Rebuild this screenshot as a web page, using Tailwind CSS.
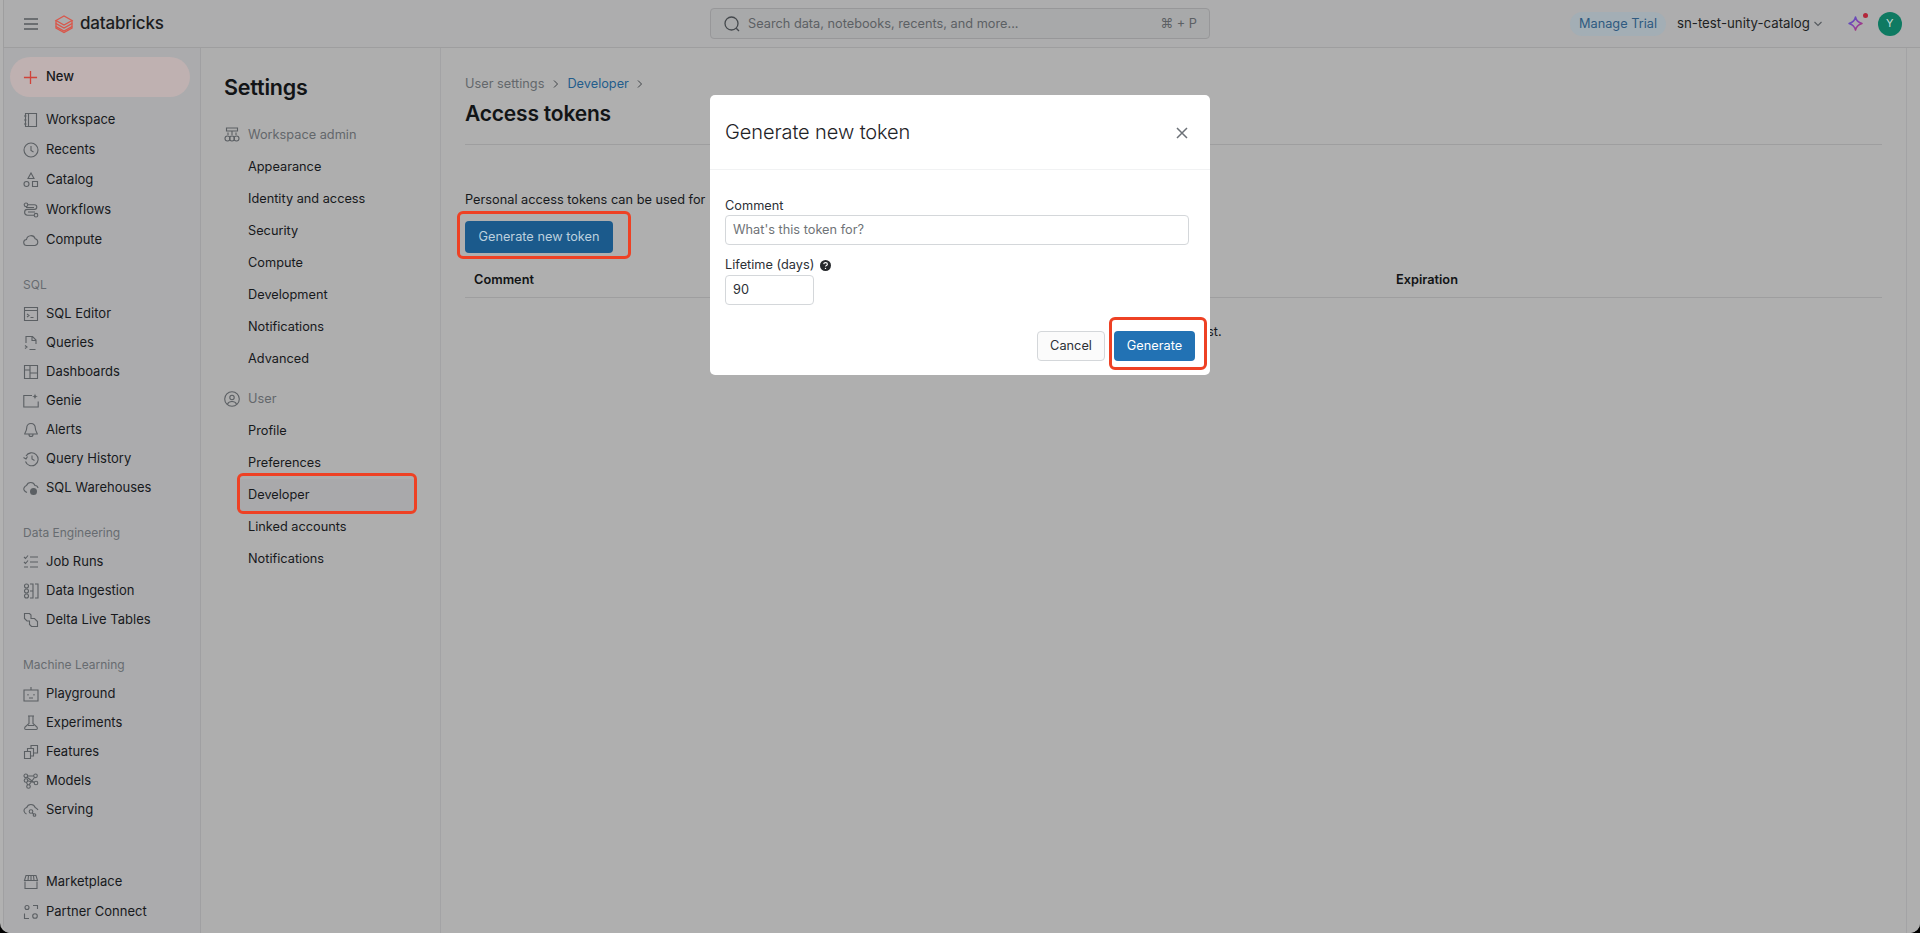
<!DOCTYPE html>
<html lang="en">

<head>
  <meta charset="UTF-8">
  <meta name="viewport" content="width=device-width, initial-scale=1.0">
  <script src="https://cdn.jsdelivr.net/npm/@tailwindcss/browser@4"></script>
  <title>Access tokens - Databricks</title>
</head>

<body class="bg-black font-['Inter','Liberation_Sans',sans-serif] text-[12.75px] text-[#17191c]">
  <div class="relative flex h-[933px] w-[1920px] flex-col overflow-hidden rounded-b-[10px] border-l-[3px] border-[#b1b1b1] bg-[#afafaf]">

    <!-- top bar -->
    <header class="flex h-[48px] shrink-0 items-center border-b border-l border-[#9e9e9f] bg-[#adadae]">
      <div class="flex w-[706px] items-center pl-[19px]">
        <svg class="h-4 w-4 text-[#55595e]" viewBox="0 0 16 16" fill="none" stroke="currentColor" stroke-width="1.4">
          <path d="M1 3h14M1 8h14M1 13h14" />
        </svg>
        <svg class="ml-[15px] h-[20px] w-[20px] text-[#d9574b]" viewBox="0 0 20 20" fill="none" stroke="currentColor" stroke-width="1.3">
          <path d="M2 6.500 10 2l8 4.500-8 4.500z" />
          <path d="M2 6.500v3l8 4.500 8-4.500v-3" />
          <path d="M2 9.500v3l8 4.500 8-4.500v-3" />
          <path d="M2 12.500v1.500l8 4.500 8-4.500v-1.500" />
        </svg>
        <span class="ml-[6px] text-[17px] font-medium tracking-[-0.2px] text-[#1c1e21]">databricks</span>
      </div>
      <div class="flex h-[31px] w-[500px] items-center rounded-[4px] border border-[#979799] bg-[#a8a9aa] pr-[12px] pl-[13px] text-[#5c6064]">
        <svg class="h-4 w-4 text-[#45494d]" viewBox="0 0 16 16" fill="none" stroke="currentColor" stroke-width="1.3">
          <circle cx="7.500" cy="7.500" r="6.500" />
          <path d="m12.200 12.200 2.800 2.800" />
        </svg>
        <span class="ml-[8px] flex-1">Search data, notebooks, recents, and more...</span>
        <span>⌘ + P</span>
      </div>
      <div class="flex flex-1 items-center pl-[360px]">
        <span class="flex h-[24px] w-[96px] items-center justify-center rounded-full bg-[#a3aeb5] text-[#2f5a80]">Manage Trial</span>
        <span class="ml-[11px] text-[13.25px] text-[#1d1f22]">sn-test-unity-catalog</span>
        <svg class="ml-[4px] h-[8px] w-[8px] text-[#55595e]" viewBox="0 0 8 8" fill="none" stroke="currentColor" stroke-width="1.100">
          <path d="m.5 2 3.500 3.500L7.500 2" />
        </svg>
        <div class="relative ml-[24px] h-[20px] w-[20px]">
          <svg class="h-[20px] w-[20px]" viewBox="0 0 20 20" fill="none" stroke-width="1.500" stroke-linejoin="round">
            <defs>
              <linearGradient id="star" x1="0" y1="0" x2="1" y2="1">
                <stop offset="0" stop-color="#4a55c8" />
                <stop offset="0.6" stop-color="#8c3fa8" />
                <stop offset="1" stop-color="#b8304f" />
              </linearGradient>
            </defs>
            <path d="M9.500 3c.7 3.600 2.500 5.300 6.500 6.500-4 1.200-5.800 3-6.500 6.500-.7-3.500-2.500-5.300-6.500-6.500 4-1.200 5.800-2.900 6.500-6.500z" stroke="url(#star)" />
          </svg>
          <span class="absolute top-[-1px] right-[-2px] h-[5px] w-[5px] rounded-full bg-[#b3263a]"></span>
        </div>
        <span class="ml-[12px] flex h-[24px] w-[24px] items-center justify-center rounded-full bg-[#0e7a62] text-[11px] text-[#c8dcd6]">Y</span>
      </div>
    </header>

    <div class="flex min-h-0 flex-1">
      <!-- main nav -->
      <nav class="flex w-[198px] shrink-0 flex-col border-r border-l border-[#a0a0a2] bg-[#ababad] pt-[9px] pb-[6px] text-[13px] text-[#17191c]">
        <div class="mx-[6px] mb-[8px] flex h-[40px] w-[180px] items-center rounded-full bg-[#bfb1b1] pl-[13px] font-medium">
          <svg class="h-[15px] w-[15px] text-[#d0433a]" viewBox="0 0 16 16" fill="none" stroke="currentColor" stroke-width="1.400">
            <path d="M8 1v14M1 8h14" />
          </svg>
          <span class="ml-[8px]">New</span>
        </div>

        <a class="flex h-[30px] items-center gap-[7px] pl-[19px]">
          <svg class="h-[16px] w-[16px] text-[#5b5f63]" viewBox="0 0 16 16" fill="none" stroke="currentColor" stroke-width="1.100"><path d="M2.500 1.500h11v13h-11zM5.500 1.500v13M1 4h2.500M1 8h2.500M1 12h2.500" /></svg>
          <span>Workspace</span>
        </a>
        <a class="flex h-[30px] items-center gap-[7px] pl-[19px]">
          <svg class="h-[16px] w-[16px] text-[#5b5f63]" viewBox="0 0 16 16" fill="none" stroke="currentColor" stroke-width="1.100"><circle cx="8" cy="8" r="7" /><path d="M8 4v4.500l2.500 1.500" /></svg>
          <span>Recents</span>
        </a>
        <a class="flex h-[30px] items-center gap-[7px] pl-[19px]">
          <svg class="h-[16px] w-[16px] text-[#5b5f63]" viewBox="0 0 16 16" fill="none" stroke="currentColor" stroke-width="1.100"><path d="M8 1 11 6.500H5z" /><circle cx="3.500" cy="12" r="2.500" /><path d="M9.500 9.500h5v5h-5z" /></svg>
          <span>Catalog</span>
        </a>
        <a class="flex h-[30px] items-center gap-[7px] pl-[19px]">
          <svg class="h-[16px] w-[16px] text-[#5b5f63]" viewBox="0 0 16 16" fill="none" stroke="currentColor" stroke-width="1.100"><circle cx="3" cy="2.800" r="1.800" /><circle cx="13" cy="13.200" r="1.800" /><path d="M4.800 2.800h6.700a2.300 2.300 0 0 1 0 4.600h-7a2.600 2.600 0 0 0 0 5.800h6.700" /><path d="M3 5.500h8M5 10h7" /></svg>
          <span>Workflows</span>
        </a>
        <a class="flex h-[30px] items-center gap-[7px] pl-[19px]">
          <svg class="h-[16px] w-[16px] text-[#5b5f63]" viewBox="0 0 16 16" fill="none" stroke="currentColor" stroke-width="1.100"><path d="M4 13.500a3 3 0 0 1-.500-6 4.500 4.500 0 0 1 8.700-.8 3.500 3.500 0 0 1-.2 6.800z" /></svg>
          <span>Compute</span>
        </a>

        <div class="mt-[20px] mb-[4px] flex h-[20px] items-center pl-[19px] text-[12px] text-[#676b70]">SQL</div>
        <a class="flex h-[29px] items-center gap-[7px] pl-[19px]">
          <svg class="h-[16px] w-[16px] text-[#5b5f63]" viewBox="0 0 16 16" fill="none" stroke="currentColor" stroke-width="1.100"><path d="M1.500 1.500h13v13h-13zM1.500 4.500h13M4 8l2 1.500L4 11M7.500 11.500h3" /></svg>
          <span>SQL Editor</span>
        </a>
        <a class="flex h-[29px] items-center gap-[7px] pl-[19px]">
          <svg class="h-[16px] w-[16px] text-[#5b5f63]" viewBox="0 0 16 16" fill="none" stroke="currentColor" stroke-width="1.100"><path d="M3 8V1.500h6.500l3.500 3.500V9M9 1.500V5.500h4M2 10.500l2 1.500-2 1.500M6.500 14.500h6" /></svg>
          <span>Queries</span>
        </a>
        <a class="flex h-[29px] items-center gap-[7px] pl-[19px]">
          <svg class="h-[16px] w-[16px] text-[#5b5f63]" viewBox="0 0 16 16" fill="none" stroke="currentColor" stroke-width="1.100"><path d="M1.500 1.500h13v13h-13zM7 1.500v13M7 9h7.500M1.500 6h5.500" /></svg>
          <span>Dashboards</span>
        </a>
        <a class="flex h-[29px] items-center gap-[7px] pl-[19px]">
          <svg class="h-[16px] w-[16px] text-[#5b5f63]" viewBox="0 0 16 16" fill="none" stroke="currentColor" stroke-width="1.100"><path d="M9 2.500H.8v11.500h14.400V8.500" /><path d="M12 .5c.3 2 1 2.700 3 3-2 .3-2.700 1-3 3-.3-2-1-2.700-3-3 2-.3 2.700-1 3-3z" fill="currentColor" stroke="none" /></svg>
          <span>Genie</span>
        </a>
        <a class="flex h-[29px] items-center gap-[7px] pl-[19px]">
          <svg class="h-[16px] w-[16px] text-[#5b5f63]" viewBox="0 0 16 16" fill="none" stroke="currentColor" stroke-width="1.100"><path d="M8 1.500c-2.800 0-4.300 2-4.300 4.500 0 3-2 5-2 6h12.600c0-1-2-3-2-6 0-2.500-1.500-4.500-4.300-4.500zM6 12.500c0 2.700 4 2.700 4 0" /></svg>
          <span>Alerts</span>
        </a>
        <a class="flex h-[29px] items-center gap-[7px] pl-[19px]">
          <svg class="h-[16px] w-[16px] text-[#5b5f63]" viewBox="0 0 16 16" fill="none" stroke="currentColor" stroke-width="1.100"><path d="M3 5a6.500 6.500 0 1 1-.500 5.500M.5 6.500 3 8l1.500-2.500M9 4.500V8l2.500 1.500" /></svg>
          <span>Query History</span>
        </a>
        <a class="flex h-[29px] items-center gap-[7px] pl-[19px]">
          <svg class="h-[16px] w-[16px] text-[#5b5f63]" viewBox="0 0 16 16" fill="none" stroke="currentColor" stroke-width="1.100"><path d="M3.500 5.500a4.500 4.500 0 0 1 8.500 0 3 3 0 0 1 3 2.500M3.500 5.500C1 6.500.5 9 1 10s1.500 2 3 2.500" /><circle cx="10.500" cy="11.500" r="3.500" fill="currentColor" stroke="none" /></svg>
          <span>SQL Warehouses</span>
        </a>

        <div class="mt-[21px] mb-[4px] flex h-[20px] items-center pl-[19px] text-[12px] text-[#676b70]">Data Engineering</div>
        <a class="flex h-[29px] items-center gap-[7px] pl-[19px]">
          <svg class="h-[16px] w-[16px] text-[#5b5f63]" viewBox="0 0 16 16" fill="none" stroke="currentColor" stroke-width="1.100"><path d="M7 3h8M7 8h8M7 13h8M1 3l1.500 1.500L5 1.500M1 8l1.500 1.500L5 6.500M1 13h4" /></svg>
          <span>Job Runs</span>
        </a>
        <a class="flex h-[29px] items-center gap-[7px] pl-[19px]">
          <svg class="h-[16px] w-[16px] text-[#5b5f63]" viewBox="0 0 16 16" fill="none" stroke="currentColor" stroke-width="1.100"><circle cx="3.500" cy="3" r="2" /><circle cx="3.500" cy="8" r="2" /><circle cx="3.500" cy="13" r="2" /><path d="M7 1h3v14H7M12 1h3v14h-3M7 8h3" /></svg>
          <span>Data Ingestion</span>
        </a>
        <a class="flex h-[29px] items-center gap-[7px] pl-[19px]">
          <svg class="h-[16px] w-[16px] text-[#5b5f63]" viewBox="0 0 16 16" fill="none" stroke="currentColor" stroke-width="1.100"><path d="M1.500 1.500h5l1.500 1.500v3.500h3.500l3 3v5h-6l-2-2v-3.500H4L1.500 6.500z" /></svg>
          <span>Delta Live Tables</span>
        </a>

        <div class="mt-[21px] mb-[4px] flex h-[20px] items-center pl-[19px] text-[12px] text-[#676b70]">Machine Learning</div>
        <a class="flex h-[29px] items-center gap-[7px] pl-[19px]">
          <svg class="h-[16px] w-[16px] text-[#5b5f63]" viewBox="0 0 16 16" fill="none" stroke="currentColor" stroke-width="1.100"><path d="M1 4h14v11H1zM8 1v3M5 8v1.500M11 8v1.500M6 12h4" /></svg>
          <span>Playground</span>
        </a>
        <a class="flex h-[29px] items-center gap-[7px] pl-[19px]">
          <svg class="h-[16px] w-[16px] text-[#5b5f63]" viewBox="0 0 16 16" fill="none" stroke="currentColor" stroke-width="1.100"><path d="M5 1h6M6 1v7.500l-4 3.500q-1 2.500 1 2.500h10q2 0 1-2.500l-4-3.500V1M5 10.500h6" /></svg>
          <span>Experiments</span>
        </a>
        <a class="flex h-[29px] items-center gap-[7px] pl-[19px]">
          <svg class="h-[16px] w-[16px] text-[#5b5f63]" viewBox="0 0 16 16" fill="none" stroke="currentColor" stroke-width="1.100"><path d="M1.500 7.500h6v7h-6zM4.500 7.500V4.500h6V12H7.500M8 4.500V1.500h6.500V9H10.500" /></svg>
          <span>Features</span>
        </a>
        <a class="flex h-[29px] items-center gap-[7px] pl-[19px]">
          <svg class="h-[16px] w-[16px] text-[#5b5f63]" viewBox="0 0 16 16" fill="none" stroke="currentColor" stroke-width="1.100"><circle cx="2.800" cy="2.800" r="1.800" /><circle cx="12.500" cy="2.800" r="1.800" /><circle cx="13" cy="10" r="1.800" /><circle cx="5.500" cy="13.500" r="1.800" /><circle cx="3" cy="7.500" r="1.800" /><path d="M4.500 3h6.200M4.500 7.800l6.800 1.700M11.500 4.500l-5.500 7.300M3.300 9.300l1.500 2.600M4 4.200l6.800 5" /></svg>
          <span>Models</span>
        </a>
        <a class="flex h-[29px] items-center gap-[7px] pl-[19px]">
          <svg class="h-[16px] w-[16px] text-[#5b5f63]" viewBox="0 0 16 16" fill="none" stroke="currentColor" stroke-width="1.100"><path d="M3.500 12C1 11 .5 8.500 1.500 7c.5-.8 1.500-1.300 2.200-1.500a4.500 4.500 0 0 1 8.500 0c.7.300 2 1 2.800 2.500" /><circle cx="8" cy="9.500" r="1.800" /><circle cx="11.500" cy="13" r="1.300" /><path d="m9.300 10.800 1.300 1.200" /></svg>
          <span>Serving</span>
        </a>

        <a class="mt-auto flex h-[30px] items-center gap-[7px] pl-[19px]">
          <svg class="h-[16px] w-[16px] text-[#5b5f63]" viewBox="0 0 16 16" fill="none" stroke="currentColor" stroke-width="1.100"><path d="M2 7.500v7h12v-7M3 1.500h10l1.500 5H1.500zM1.500 6.500h13M5.500 1.500l-.5 5M10.500 1.500l.5 5M8 1.500v5" /></svg>
          <span>Marketplace</span>
        </a>
        <a class="flex h-[30px] items-center gap-[7px] pl-[19px]">
          <svg class="h-[16px] w-[16px] text-[#5b5f63]" viewBox="0 0 16 16" fill="none" stroke="currentColor" stroke-width="1.100"><circle cx="4" cy="3.500" r="2" /><circle cx="12" cy="12" r="2.300" /><path d="M10 1.500h4.500V5M1.500 9.500v5H6" /></svg>
          <span>Partner Connect</span>
        </a>
      </nav>

      <!-- settings nav -->
      <aside class="w-[240px] shrink-0 border-r border-[#a3a3a5] bg-[#aeaeae] pt-[24px]">
        <h2 class="mb-[17px] h-[30px] pl-[23px] text-[21.5px] leading-[30px] font-semibold tracking-[-0.2px] text-[#121416]">Settings</h2>

        <div class="flex h-[31.5px] items-center gap-[8px] pl-[23px] text-[#63676b]">
          <svg class="h-[16px] w-[16px] text-[#5b5f63]" viewBox="0 0 16 16" fill="none" stroke="currentColor" stroke-width="1.100"><path d="M2.500 1h11v3h-11zM8 4v4M4 5.500V8M12 5.500V8" /><circle cx="3.500" cy="11.500" r="2.500" /><circle cx="8" cy="11.500" r="2.500" /><circle cx="12.500" cy="11.500" r="2.500" /></svg>
          <span>Workspace admin</span>
        </div>
        <a class="block h-[32px] pl-[47px] leading-[32px]">Appearance</a>
        <a class="block h-[32px] pl-[47px] leading-[32px]">Identity and access</a>
        <a class="block h-[32px] pl-[47px] leading-[32px]">Security</a>
        <a class="block h-[32px] pl-[47px] leading-[32px]">Compute</a>
        <a class="block h-[32px] pl-[47px] leading-[32px]">Development</a>
        <a class="block h-[32px] pl-[47px] leading-[32px]">Notifications</a>
        <a class="block h-[32px] pl-[47px] leading-[32px]">Advanced</a>

        <div class="mt-[8.500px] flex h-[31.5px] items-center gap-[8px] pl-[23px] text-[#63676b]">
          <svg class="h-[16px] w-[16px] text-[#5b5f63]" viewBox="0 0 16 16" fill="none" stroke="currentColor" stroke-width="1.100"><circle cx="8" cy="8" r="7.300" /><circle cx="8" cy="6.500" r="2.200" /><path d="M3.500 13c1-2 2.500-2.500 4.500-2.500s3.500.5 4.500 2.500" /></svg>
          <span>User</span>
        </div>
        <a class="block h-[32px] pl-[47px] leading-[32px]">Profile</a>
        <a class="block h-[32px] pl-[47px] leading-[32px]">Preferences</a>
        <a class="relative ml-[37px] block h-[32px] w-[178px] bg-[#a9a9ab] pl-[10px] leading-[32px]">
          Developer
          <span class="absolute top-[-6px] right-[-1px] bottom-[-3px] left-[-1px] rounded-[6px] border-[3px] border-[#ee4124]"></span>
        </a>
        <a class="block h-[32px] pl-[47px] leading-[32px]">Linked accounts</a>
        <a class="block h-[32px] pl-[47px] leading-[32px]">Notifications</a>
      </aside>

      <!-- page content -->
      <main class="flex min-w-0 flex-1 flex-col px-[24px] pt-[25.500px]">
        <div class="flex h-[20px] items-center text-[#63676b]">
          <span>User settings</span>
          <svg class="mx-[8.500px] h-[8px] w-[6px] text-[#3f4347]" viewBox="0 0 6 8" fill="none" stroke="currentColor" stroke-width="1"><path d="m1 .5 3.500 3.500L1 7.500" /></svg>
          <span class="text-[#235d8c]">Developer</span>
          <svg class="mx-[8px] h-[8px] w-[6px] text-[#3f4347]" viewBox="0 0 6 8" fill="none" stroke="currentColor" stroke-width="1"><path d="m1 .5 3.500 3.500L1 7.500" /></svg>
        </div>
        <h1 class="mt-[4.500px] h-[32px] text-[21px] leading-[32px] font-semibold tracking-[-0.2px] text-[#121416]">Access tokens</h1>
        <div class="mt-[14px] border-b border-[#9e9e9f]"></div>
        <p class="mt-[45px] h-[20px] leading-[20px]">Personal access tokens can be used for</p>
        <button class="relative mt-[11px] h-[32px] w-[148px] rounded-[4px] bg-[#1b5a8c] text-[#bcd0de]">
          Generate new token
          <span class="absolute top-[-10px] right-[-18px] bottom-[-6px] left-[-8px] rounded-[6px] border-[3px] border-[#ee4124]"></span>
        </button>
        <div class="mt-[9px] flex h-[36px] items-center border-b border-[#9e9e9f] font-semibold text-[#121416]">
          <span class="w-[931px] pl-[9px]">Comment</span>
          <span>Expiration</span>
        </div>
        <p class="mt-[24px] text-center">No tokens exist.</p>
      </main>

      <div class="w-[14px] shrink-0 border-l border-[#a3a3a5] bg-[#afafaf]"></div>
    </div>

    <!-- dialog -->
    <div class="absolute top-[95px] left-[707px] h-[280px] w-[500px] rounded-[5px] bg-white text-[#2c3036]">
      <div class="flex h-[75px] items-center justify-between border-b border-[#f1f2f3] pr-[22px] pl-[15px]">
        <h3 class="text-[20px] font-light tracking-[-0.1px] text-[#1f2327]">Generate new token</h3>
        <svg class="mt-[2px] h-[12px] w-[12px] text-[#6c7177]" viewBox="0 0 12 12" fill="none" stroke="currentColor" stroke-width="1.500"><path d="m1 1 10 10M11 1 1 11" /></svg>
      </div>
      <div class="px-[15px] pt-[26px]">
        <label class="block h-[19px] leading-[19px]">Comment</label>
        <div class="flex h-[30px] w-[464px] items-center rounded-[4px] border border-[#d4d7da] pl-[7px] text-[#6f7377]">What's this token for?</div>
        <label class="mt-[10px] flex h-[20px] items-center leading-[20px]">
          Lifetime (days)
          <svg class="ml-[6px] h-[11px] w-[11px]" viewBox="0 0 11 11"><circle cx="5.500" cy="5.500" r="5.500" fill="#26292d" /><path d="M3.700 4.100c.2-2 3.700-1.900 3.700.1 0 1.300-1.900 1.200-1.900 2.400" fill="none" stroke="#fff" stroke-width="1.100" /><circle cx="5.500" cy="8.400" r=".7" fill="#fff" /></svg>
        </label>
        <div class="flex h-[30px] w-[89px] items-center rounded-[4px] border border-[#d4d7da] pl-[7px]">90</div>
      </div>
      <div class="mt-[26px] flex justify-end gap-[9px] pr-[15px]">
        <button class="h-[30px] w-[68px] rounded-[4px] border border-[#d4d7da] bg-[#fbfbfb]">Cancel</button>
        <button class="relative h-[30px] w-[81px] rounded-[4px] bg-[#2272b4] text-white">
          Generate
          <span class="absolute top-[-14px] right-[-12px] bottom-[-9px] left-[-5px] rounded-[6px] border-[3px] border-[#ee4124]"></span>
        </button>
      </div>
    </div>
  </div>
</body>

</html>
